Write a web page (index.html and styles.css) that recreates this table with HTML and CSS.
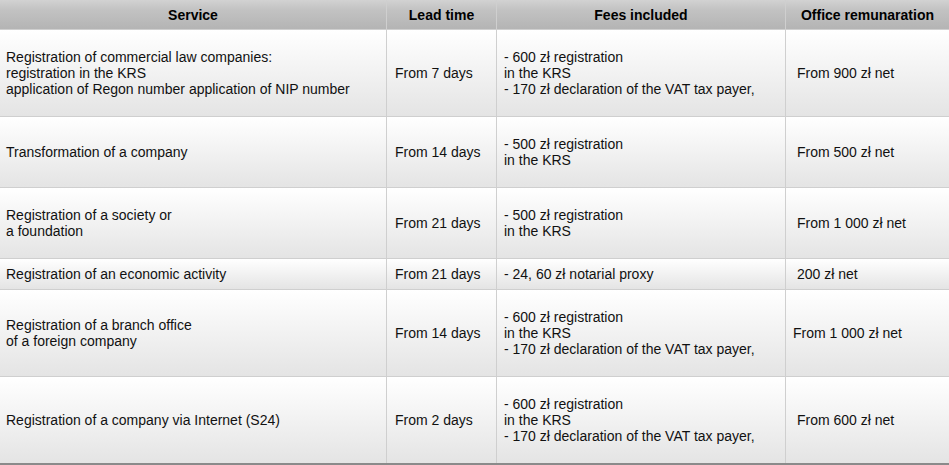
FILE: index.html
```html
<!DOCTYPE html>
<html lang="en">
<head>
<meta charset="utf-8">
<title>Services</title>
<link rel="stylesheet" href="styles.css">
</head>
<body>
<div class="table">
  <div class="th">Service</div>
  <div class="th">Lead time</div>
  <div class="th">Fees included</div>
  <div class="th">Office remunaration</div>

  <div class="td c1">Registration of commercial law companies:<br>registration in the KRS<br>application of Regon number application of NIP number</div>
  <div class="td c2">From 7 days</div>
  <div class="td c3">- 600 zł registration<br>in the KRS<br>- 170 zł declaration of the VAT tax payer,</div>
  <div class="td c4 ind">From 900 zł net</div>

  <div class="td c1">Transformation of a company</div>
  <div class="td c2">From 14 days</div>
  <div class="td c3">- 500 zł registration<br>in the KRS</div>
  <div class="td c4 ind">From 500 zł net</div>

  <div class="td c1">Registration of a society or<br>a foundation</div>
  <div class="td c2">From 21 days</div>
  <div class="td c3">- 500 zł registration<br>in the KRS</div>
  <div class="td c4 ind">From 1 000 zł net</div>

  <div class="td c1">Registration of an economic activity</div>
  <div class="td c2">From 21 days</div>
  <div class="td c3">- 24, 60 zł notarial proxy</div>
  <div class="td c4 ind">200 zł net</div>

  <div class="td c1">Registration of a branch office<br>of a foreign company</div>
  <div class="td c2">From 14 days</div>
  <div class="td c3">- 600 zł registration<br>in the KRS<br>- 170 zł declaration of the VAT tax payer,</div>
  <div class="td c4">From 1 000 zł net</div>

  <div class="td c1">Registration of a company via Internet (S24)</div>
  <div class="td c2">From 2 days</div>
  <div class="td c3">- 600 zł registration<br>in the KRS<br>- 170 zł declaration of the VAT tax payer,</div>
  <div class="td c4 ind">From 600 zł net</div>
</div>
</body>
</html>
```
FILE: styles.css
```css
html, body {
  margin: 0;
  padding: 0;
  background: #ffffff;
}
body {
  font-family: "Liberation Sans", Arial, sans-serif;
  font-size: 14px;
  line-height: 16px;
  color: #111;
}
.table {
  display: grid;
  grid-template-columns: 386px 109px 288px 1fr;
  grid-template-rows: 29px 86px 70px 70px 30px 86px 86px;
  gap: 1px;
  width: 949px;
  background: #cfcfcf;
  border-bottom: 2px solid #8a8a8a;
}
.th {
  display: flex;
  align-items: center;
  justify-content: center;
  font-weight: bold;
  color: #000;
  background: linear-gradient(#d2d2d2 0%, #c2c2c2 35%, #b4b4b4 100%);
}
.td {
  display: flex;
  align-items: center;
  background: linear-gradient(#ffffff 0%, #f3f3f3 45%, #e4e4e4 100%);
}
.c1 { padding-left: 6px; }
.c2 { padding-left: 8px; }
.c3 { padding-left: 7px; }
.c4 { padding-left: 7px; }
.c4.ind { padding-left: 11px; }
```
